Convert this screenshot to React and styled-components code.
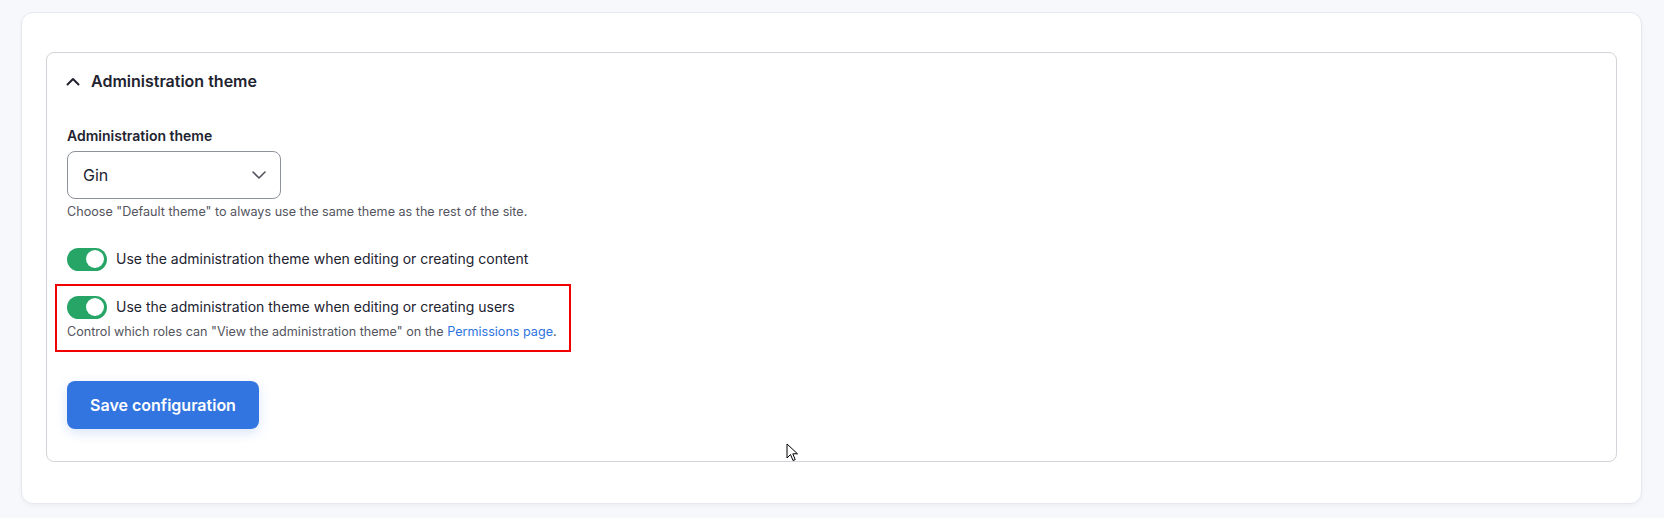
import React from "react";
import styled, { createGlobalStyle } from "styled-components";

const Global = createGlobalStyle`
  html, body { margin: 0; padding: 0; }
  body {
    background: #f7f8fc;
    font-family: Inter, "Noto Sans", sans-serif;
    color: #222330;
    -webkit-font-smoothing: antialiased;
  }
  * { box-sizing: border-box; }
`;

const Page = styled.div`
  position: relative;
  padding: 12px 22px 14px 21px;
`;

const Card = styled.div`
  background: #fff;
  border: 1px solid #e6e8ef;
  border-radius: 12px;
  box-shadow: 0 2px 4px rgba(34, 35, 48, 0.04);
  padding: 39px 24px 41px 24px;
`;

const Fieldset = styled.details`
  border: 1px solid #d3d4d9;
  border-radius: 8px;
  background: #fff;
`;

const Summary = styled.summary`
  list-style: none;
  display: flex;
  align-items: center;
  gap: 11px;
  padding: 18px 19px;
  font-size: 16px;
  line-height: 20px;
  font-weight: 600;
  color: #222330;
  cursor: pointer;
  &::-webkit-details-marker { display: none; }
`;

const Body = styled.div`
  display: flex;
  flex-direction: column;
  align-items: flex-start;
  padding: 17px 20px 32px 20px;
`;

const Label = styled.label`
  font-size: 14px;
  line-height: 20px;
  font-weight: 600;
  color: #222330;
`;

const SelectBox = styled.div`
  margin-top: 5px;
  width: 214px;
  height: 48px;
  border: 1px solid #8e929c;
  border-radius: 8px;
  display: flex;
  align-items: center;
  justify-content: space-between;
  padding: 0 14px 0 15px;
  font-size: 16px;
  color: #222330;
`;

const Description = styled.div`
  margin-top: ${(p) => p.$mt || 0}px;
  font-size: 12.6px;
  line-height: 18px;
  color: #545560;
`;

const Link = styled.a`
  color: #2e74e0;
  text-decoration: none;
`;

const ToggleRow = styled.div`
  display: flex;
  align-items: center;
  gap: 9px;
  margin-top: ${(p) => p.$mt || 0}px;
  font-size: 14px;
  line-height: 24px;
  color: #222330;
`;

const Switch = styled.span`
  position: relative;
  flex: none;
  width: 40px;
  height: 23px;
  border-radius: 12px;
  background: #26a567;
  &::after {
    content: "";
    position: absolute;
    top: 2.5px;
    right: 3px;
    width: 18px;
    height: 18px;
    border-radius: 50%;
    background: #fff;
  }
`;

const Highlight = styled.div`
  margin-top: 13px;
  margin-left: -12px;
  border: 2px solid #f00000;
  padding: 9px 12px 9px 10px;
`;

const Button = styled.button`
  margin-top: 29px;
  height: 48px;
  width: 192px;
  border: none;
  border-radius: 8px;
  background: #3375e0;
  color: #fff;
  font-family: Inter, "Noto Sans", sans-serif;
  font-size: 16px;
  font-weight: 600;
  box-shadow: 0 4px 12px rgba(51, 117, 224, 0.18);
  cursor: pointer;
`;

const Cursor = styled.svg`
  position: absolute;
  left: 786px;
  top: 443px;
`;

export default function App() {
  return (
    <>
      <Global />
      <Page>
        <Card>
          <Fieldset open>
            <Summary>
              <svg width="14" height="9" viewBox="0 0 14 9">
                <path d="M1.5 7.5 L7 2 L12.5 7.5" fill="none" stroke="#222330" strokeWidth="2" strokeLinecap="round" strokeLinejoin="round" />
              </svg>
              Administration theme
            </Summary>
            <Body>
              <Label>Administration theme</Label>
              <SelectBox>
                <span>Gin</span>
                <svg width="14" height="8" viewBox="0 0 14 8">
                  <path d="M1 1 L7 7 L13 1" fill="none" stroke="#545560" strokeWidth="1.6" strokeLinecap="round" strokeLinejoin="round" />
                </svg>
              </SelectBox>
              <Description $mt={4}>
                Choose "Default theme" to always use the same theme as the rest of the site.
              </Description>
              <ToggleRow $mt={26}>
                <Switch />
                Use the administration theme when editing or creating content
              </ToggleRow>
              <Highlight>
                <ToggleRow>
                  <Switch />
                  Use the administration theme when editing or creating users
                </ToggleRow>
                <Description $mt={4}>
                  Control which roles can "View the administration theme" on the{" "}
                  <Link href="#">Permissions page</Link>.
                </Description>
              </Highlight>
              <Button>Save configuration</Button>
            </Body>
          </Fieldset>
        </Card>
        <Cursor width="13" height="20" viewBox="0 0 13 20">
          <path d="M1 1 L1 15 L4.5 11.5 L7 17.5 L9.2 16.6 L6.8 10.8 L11.5 10.8 Z" fill="#fff" stroke="#000" strokeWidth="1" strokeLinejoin="round" />
        </Cursor>
      </Page>
    </>
  );
}
